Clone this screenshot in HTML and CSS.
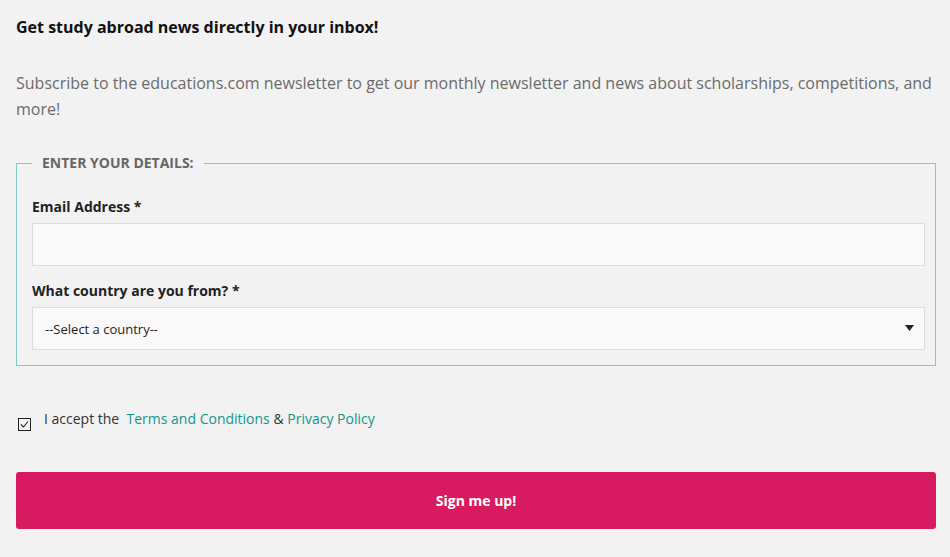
FILE: index.html
```html
<!DOCTYPE html>
<html lang="en">
<head>
<meta charset="utf-8">
<title>Newsletter</title>
<link rel="stylesheet" href="styles.css">
</head>
<body>
<div class="wrap">
  <h2 class="title">Get study abroad news directly in your inbox!</h2>
  <p class="intro">Subscribe to the educations.com newsletter to get our monthly newsletter and news about scholarships, competitions, and more!</p>
  <form class="form">
    <fieldset class="details">
      <legend class="legend">Enter your details:</legend>
      <label class="label" for="email">Email Address *</label>
      <input class="field" id="email" type="text">
      <label class="label label-2" for="country">What country are you from? *</label>
      <div class="select">
        <span class="select-text">--Select a country--</span>
        <svg class="caret" width="9" height="6" viewBox="0 0 9 6"><path d="M0 0H9L4.5 6Z" fill="#222"/></svg>
      </div>
    </fieldset>
    <div class="accept">
      <span class="check">
        <svg width="13" height="13" viewBox="0 0 13 13"><rect x="0.5" y="0.5" width="12" height="12" fill="none" stroke="#222"/><path d="M3 6.5L5.5 9L10 3.5" fill="none" stroke="#222" stroke-width="1.1"/></svg>
      </span>
      <span class="accept-text">I accept the&nbsp; <a href="#" class="link">Terms and Conditions</a> &amp; <a href="#" class="link">Privacy Policy</a></span>
    </div>
    <button type="button" class="btn">Sign me up!</button>
  </form>
</div>
</body>
</html>
```
FILE: styles.css
```css
* { box-sizing: border-box; }
html, body { margin: 0; padding: 0; }
body {
  background: #f2f2f2;
  font-family: "Open Sans", "Liberation Sans", sans-serif;
  color: #222;
}
.wrap {
  padding: 14px 14px 0 16px;
}
.title {
  margin: 0;
  font-size: 16px;
  font-weight: 700;
  line-height: 26px;
  color: #111;
}
.intro {
  margin: 30px 0 0;
  font-size: 16px;
  line-height: 26px;
  color: #6b6b6b;
}
.form { margin-top: 32px; }
.details {
  margin: 0;
  border: 1px solid #7dcdc4;
  padding: 25px 10px 15px 15px;
  min-width: 0;
}
.legend {
  padding: 0 10px;
  font-size: 14px;
  font-weight: 700;
  text-transform: uppercase;
  color: #666;
  line-height: 18px;
}
.label {
  display: block;
  font-size: 14px;
  font-weight: 700;
  color: #222;
  line-height: 20px;
  margin: 0 0 6px;
}
.label-2 { margin-top: 15px; }
.field {
  display: block;
  width: 100%;
  height: 43px;
  background: #f9f9f9;
  border: 1px solid #dcdcdc;
  margin: 0;
  font-family: inherit;
  outline: none;
}
.select {
  display: flex;
  align-items: center;
  justify-content: space-between;
  height: 43px;
  background: #f9f9f9;
  border: 1px solid #dcdcdc;
  padding: 0 10px 0 12px;
}
.select-text {
  font-size: 13px;
  color: #222;
  padding-top: 1px;
}
.caret { margin-top: -2px; }
.accept {
  display: flex;
  align-items: flex-start;
  margin-top: 43px;
  padding-left: 2px;
}
.check {
  display: flex;
  width: 13px;
  height: 13px;
  margin-top: 9px;
  margin-right: 13px;
}
.accept-text {
  font-size: 14px;
  line-height: 20px;
  color: #333;
  padding-top: 0;
}
.link {
  color: #139688;
  text-decoration: none;
}
.btn {
  display: block;
  width: 100%;
  height: 57px;
  margin-top: 41px;
  background: #d81b60;
  border: none;
  border-radius: 3px;
  color: #fff;
  font-family: inherit;
  font-size: 14px;
  font-weight: 700;
  cursor: pointer;
}
```
